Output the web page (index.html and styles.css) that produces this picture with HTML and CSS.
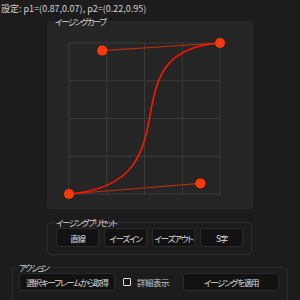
FILE: index.html
```html
<!DOCTYPE html>
<html>
<head>
	<link rel="stylesheet" href="styles.css">
</head>
<body>
	<div class="status">設定: p1=(0.87,0.07), p2=(0.22,0.95)</div>

	<fieldset class="group curve">
		<legend>イージングカーブ</legend>
		<svg class="graph" width="204" height="179" viewBox="0 0 204 179">
			<g class="grid">
				<rect x="21" y="16" width="151" height="151"/>
				<line x1="58.75" y1="16" x2="58.75" y2="167"/>
				<line x1="96.5" y1="16" x2="96.5" y2="167"/>
				<line x1="134.25" y1="16" x2="134.25" y2="167"/>
				<line x1="21" y1="53.75" x2="172" y2="53.75"/>
				<line x1="21" y1="91.5" x2="172" y2="91.5"/>
				<line x1="21" y1="129.25" x2="172" y2="129.25"/>
			</g>
			<line class="handle" x1="21" y1="167" x2="152.4" y2="156.4"/>
			<line class="handle" x1="172" y1="16" x2="54.2" y2="23.6"/>
			<path class="bezier" d="M21 167 C152.4 156.4, 54.2 23.6, 172 16"/>
			<circle class="knob" cx="21" cy="167" r="5"/>
			<circle class="knob" cx="172" cy="16" r="5"/>
			<circle class="knob" cx="152.4" cy="156.4" r="5"/>
			<circle class="knob" cx="54.2" cy="23.6" r="5"/>
		</svg>
	</fieldset>

	<fieldset class="group presets">
		<legend>イージングプリセット</legend>
		<div class="row">
			<button class="btn preset">直線</button>
			<button class="btn preset">イーズイン</button>
			<button class="btn preset">イーズアウト</button>
			<button class="btn preset">S字</button>
		</div>
	</fieldset>

	<fieldset class="group actions">
		<legend>アクション</legend>
		<div class="row">
			<button class="btn wide">選択キーフレームから取得</button>
			<label class="check"><span class="box"></span>詳細表示</label>
			<button class="btn wide apply">イージングを適用</button>
		</div>
	</fieldset>
</body>
</html>
```

FILE: styles.css
```css
* {
	box-sizing: border-box;
}

body {
	margin: 0;
	background: #1c1c1c;
	color: #d2d2d2;
	font-family: "Noto Sans CJK JP", "Noto Sans", sans-serif;
	font-size: 9px;
	font-feature-settings: "palt";
	overflow: hidden;
}

.status {
	height: 15px;
	line-height: 15px;
	padding-left: 1px;
	margin-top: 1px;
}

.group {
	margin: 0;
	padding: 0;
	border: 1px solid #2c2c2c;
	border-radius: 4px;
}

.group legend {
	margin-left: 6px;
	padding: 0 1px;
	line-height: 11px;
	font-size: 8.5px;
	letter-spacing: -1.5px;
	color: #d2d2d2;
}

.curve {
	margin: 0 0 0 47px;
	width: 205px;
	height: 193px;
	background: #252525;
	border-color: #282828;
}

.graph {
	display: block;
}

.grid rect,
.grid line {
	fill: none;
	stroke: #3b3b3b;
	stroke-width: 1;
}

.handle {
	stroke: #b3300f;
	stroke-width: 1.2;
}

.bezier {
	fill: none;
	stroke: #ff1500;
	stroke-width: 1.6;
}

.knob {
	fill: #ff3a08;
}

.presets {
	margin: 8px 0 0 47px;
	width: 205px;
	height: 38px;
	padding: 0 8px;
}

.presets legend,
.actions legend {
	margin-left: -1px;
}

.row {
	display: flex;
	align-items: center;
	gap: 5px;
}

.btn {
	font: inherit;
	font-size: 8.5px;
	letter-spacing: -1.2px;
	white-space: nowrap;
	color: #dcdcdc;
	background: #121212;
	border: 1px solid #2a2a2a;
	border-radius: 3px;
	height: 19px;
	padding: 0;
}

.preset {
	width: 43px;
}

.actions {
	margin: 7px 0 0 12px;
	width: 276px;
	height: 50px;
	padding: 0 6px;
}

.wide {
	width: 96px;
	height: 18px;
}

.check {
	display: flex;
	align-items: center;
	gap: 6px;
	margin-left: 3px;
	font-size: 8.5px;
	letter-spacing: -0.5px;
	color: #c8c8c8;
}

.box {
	width: 8px;
	height: 8px;
	border: 1.5px solid #e0e0e0;
	border-radius: 1px;
	background: #161616;
}

.apply {
	margin-left: auto;
	margin-right: 2px;
}
```
